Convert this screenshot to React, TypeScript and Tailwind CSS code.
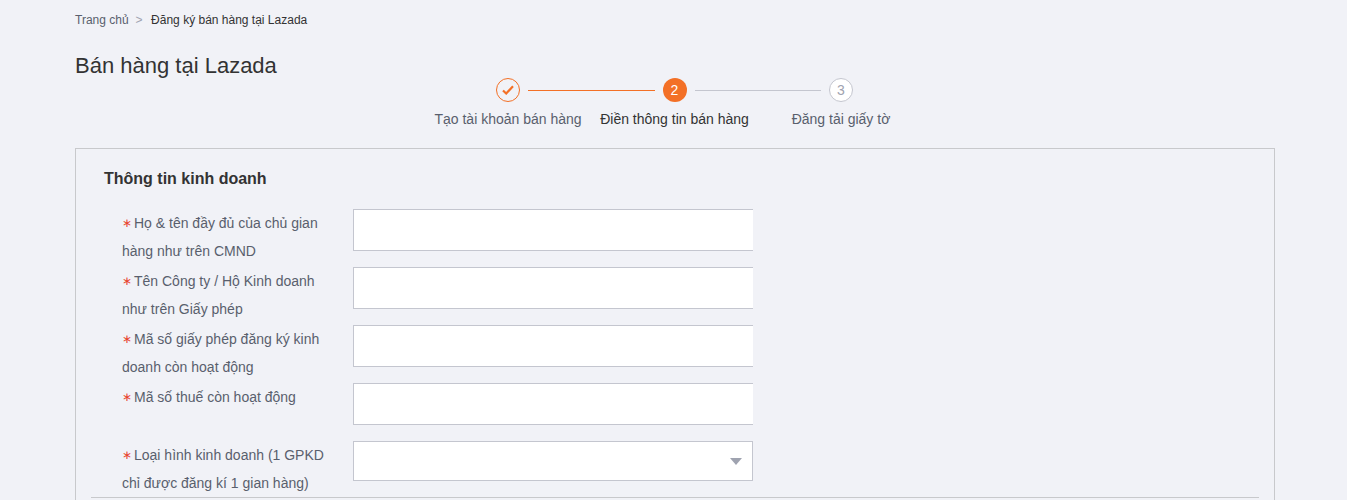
const fields = [
  "Họ & tên đầy đủ của chủ gian hàng như trên CMND",
  "Tên Công ty / Hộ Kinh doanh như trên Giấy phép",
  "Mã số giấy phép đăng ký kinh doanh còn hoạt động",
  "Mã số thuế còn hoạt động",
];

function Label({ text }: { text: string }) {
  return (
    <label className="w-[205px] mr-[26px] shrink-0 text-sm leading-[28px] text-[#595f6d]">
      <span className="inline-block w-[12px] align-top text-xs leading-[28px] text-[#e8432e]">∗</span>
      {text}
    </label>
  );
}

export default function App() {
  return (
    <div className="h-[500px] overflow-hidden bg-[#f1f2f7] pl-[75px] font-['Liberation_Sans',Arial,sans-serif]">
      <div className="w-[1200px]">
        {/* breadcrumb */}
        <div className="flex items-center h-[40px] text-xs text-[#333]">
          <span className="text-[#595f6d]">Trang chủ</span>
          <span className="ml-[7px] mr-[8.5px] text-[#9fa3b0]">&gt;</span>
          <span>Đăng ký bán hàng tại Lazada</span>
        </div>

        <h1 className="mt-[11px] h-[27px] text-[22px] leading-[30px] font-normal text-[#333]">Bán hàng tại Lazada</h1>

        {/* steps */}
        <div className="flex items-center w-[357px] ml-[421px]">
          <div className="flex items-center justify-center w-6 h-6 rounded-full border border-[#f37026]">
            <svg width="12" height="10" viewBox="0 0 12 10" fill="none">
              <path d="M1 5.5 4.2 8.5 11 1.2" stroke="#f37026" strokeWidth="2.2" />
            </svg>
          </div>
          <div className="flex-1 mx-2 h-px bg-[#f37026]" />
          <div className="flex items-center justify-center w-6 h-6 rounded-full bg-[#f37026] text-sm text-white">2</div>
          <div className="flex-1 mx-2 h-px bg-[#c4c6cf]" />
          <div className="flex items-center justify-center w-6 h-6 rounded-full border border-[#c4c6cf] bg-white text-sm text-[#9fa3b0]">3</div>
        </div>
        <div className="flex ml-[350px] mt-[7px] text-sm leading-[20px] text-[#595f6d]">
          <span className="w-[166px] text-center whitespace-nowrap">Tạo tài khoản bán hàng</span>
          <span className="w-[167px] text-center whitespace-nowrap text-[#333]">Điền thông tin bán hàng</span>
          <span className="w-[166px] text-center whitespace-nowrap">Đăng tải giấy tờ</span>
        </div>

        {/* form panel */}
        <div className="mt-[19px] border border-[#c8c9cc] px-[15px] h-[500px]">
          <h2 className="pl-[13px] pt-[21px] pb-[21px] text-base leading-[18px] font-bold text-[#333]">Thông tin kinh doanh</h2>
          <div className="pl-[31px]">
            {fields.map((f) => (
              <div key={f} className="flex h-[58px]">
                <Label text={f} />
                <input className="w-[400px] h-[42px] bg-white border border-r-0 border-[#c4c6cf] outline-none" />
              </div>
            ))}
            <div className="flex h-[56px]">
              <Label text="Loại hình kinh doanh (1 GPKD chỉ được đăng kí 1 gian hàng)" />
              <div className="relative w-[400px] h-[40px] bg-white border border-[#c4c6cf]">
                <svg className="absolute right-[10px] top-[16px]" width="12" height="7" viewBox="0 0 12 7">
                  <path d="M0 0h12L6 7z" fill="#9fa3b0" />
                </svg>
              </div>
            </div>
          </div>
          <div className="h-px bg-[#c8c9cc]" />
        </div>
      </div>
    </div>
  );
}
